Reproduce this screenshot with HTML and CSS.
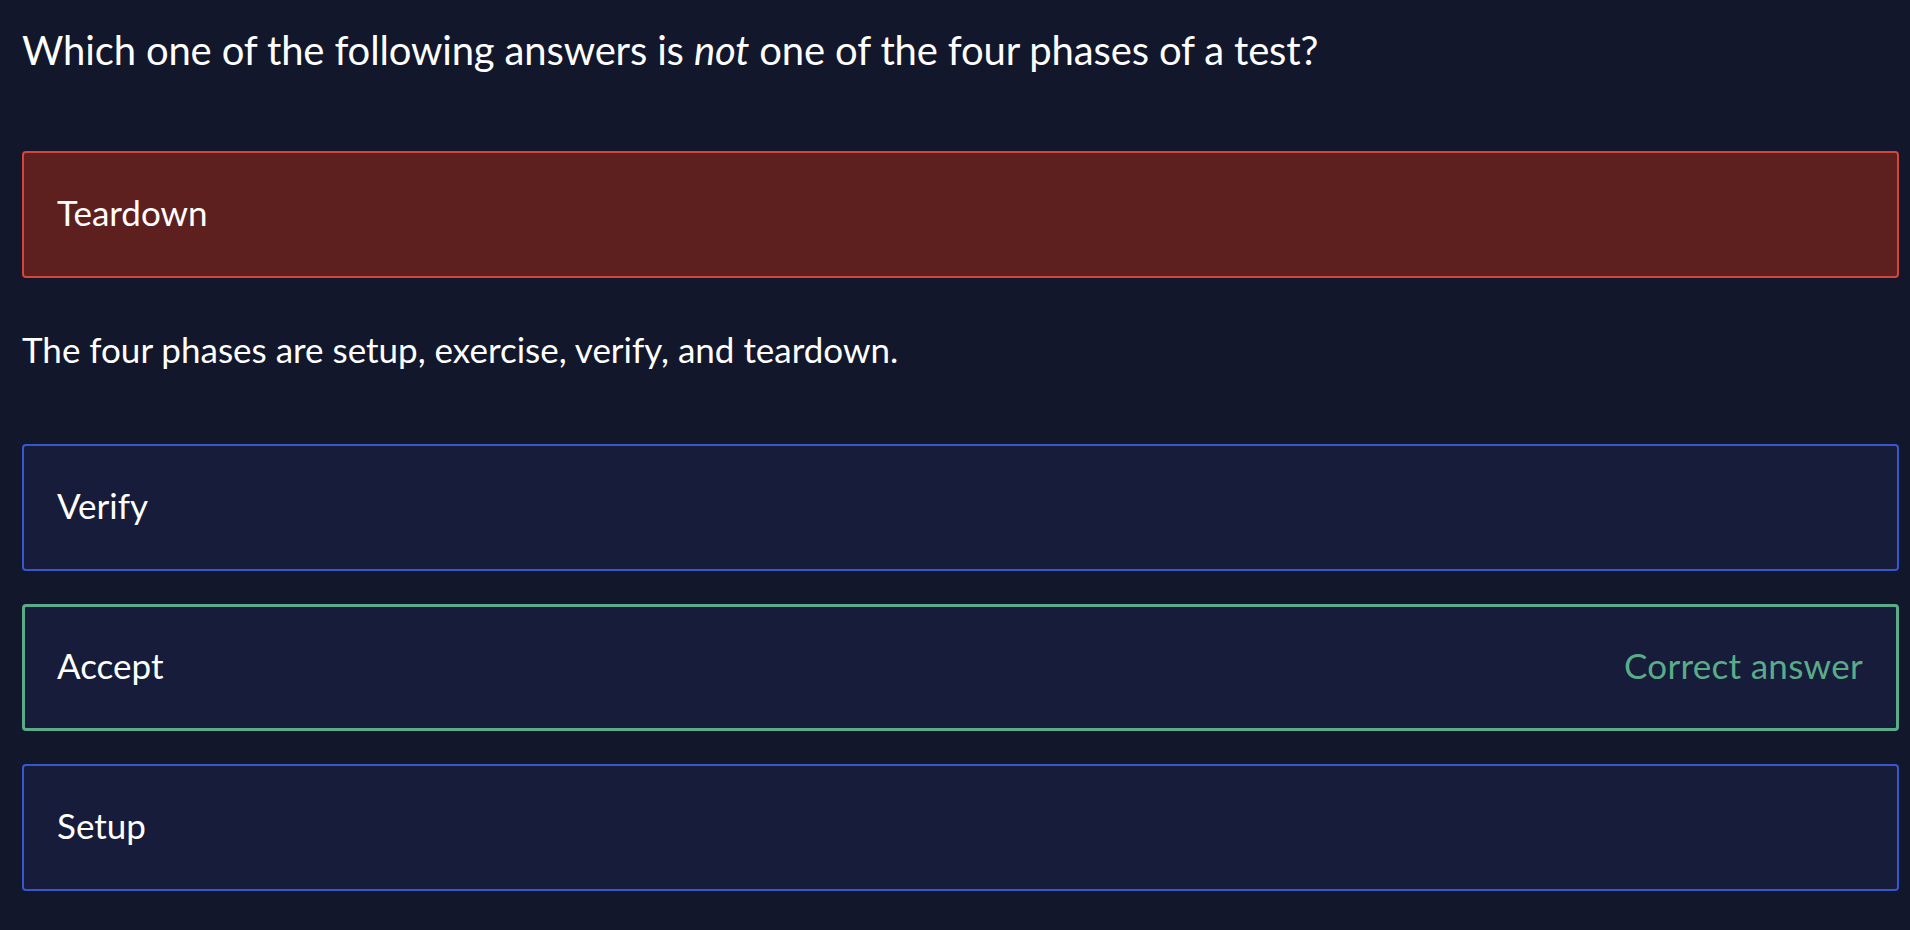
FILE: index.html
```html
<!DOCTYPE html>
<html lang="en">
<head>
<meta charset="utf-8">
<title>Quiz</title>
<link rel="stylesheet" href="styles.css">
</head>
<body>
<main class="quiz">
  <h1 class="question">Which one of the following answers is <em>not</em> one of the four phases of a test?</h1>
  <div class="option option-wrong"><span class="label">Teardown</span></div>
  <p class="explanation">The four phases are setup, exercise, verify, and teardown.</p>
  <div class="options">
    <div class="option"><span class="label">Verify</span></div>
    <div class="option option-correct"><span class="label">Accept</span><span class="status">Correct answer</span></div>
    <div class="option"><span class="label">Setup</span></div>
  </div>
</main>
</body>
</html>
```

FILE: styles.css
```css
html, body {
  margin: 0;
  padding: 0;
  background: #12172c;
  color: #ffffff;
  font-family: Lato, "Noto Sans", sans-serif;
}

.quiz {
  padding: 26px 11px 40px 22px;
  display: flex;
  flex-direction: column;
}

.question {
  margin: 0;
  font-size: 40px;
  line-height: 48px;
  font-weight: 400;
  letter-spacing: -0.15px;
}

.question em {
  font-style: italic;
}

.option {
  box-sizing: border-box;
  height: 127px;
  display: flex;
  align-items: center;
  justify-content: space-between;
  padding: 0 34px 4px 33px;
  border: 2px solid #3757cc;
  border-radius: 4px;
  background: #161c3a;
  font-size: 35px;
  line-height: 41px;
}

.option-wrong {
  margin-top: 77px;
  background: #5e1f1f;
  border-color: #d4453b;
}

.option-correct {
  border: 3px solid #5aab88;
  padding-left: 32px;
  padding-right: 33px;
}

.status {
  color: #5aab88;
  letter-spacing: 0.3px;
}

.explanation {
  margin: 51px 0 74px;
  font-size: 35px;
  line-height: 41px;
}

.options {
  display: flex;
  flex-direction: column;
  gap: 33px;
}
```
